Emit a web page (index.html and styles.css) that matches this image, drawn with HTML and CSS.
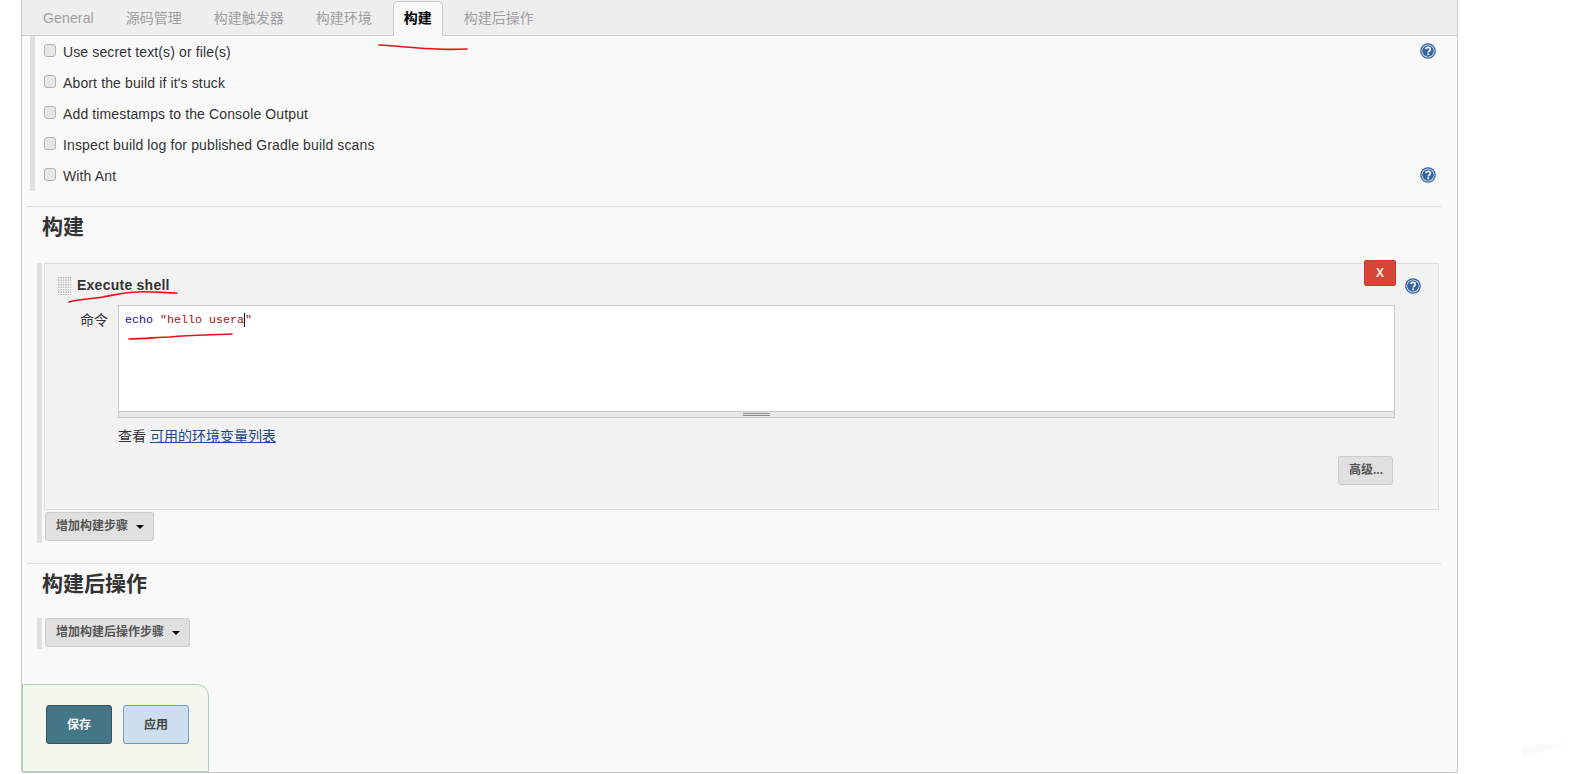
FILE: index.html
```html
<!DOCTYPE html>
<html lang="zh">
<head>
<meta charset="utf-8">
<title>构建</title>
<link rel="stylesheet" href="styles.css">
</head>
<body>
<svg width="0" height="0" class="defs">
  <symbol id="help" viewBox="0 0 16 16">
    <circle cx="8" cy="8" r="7.8" fill="#2f5d9c"/>
    <circle cx="8" cy="8" r="6.6" fill="#dfe8f3"/>
    <circle cx="8" cy="8" r="5.8" fill="#35659f"/>
    <path d="M5.9 6.3C6 5 7 4.4 8.1 4.4c1.3 0 2.2.8 2.2 1.9 0 1.7-2.1 1.7-2.1 3.3" fill="none" stroke="#fff" stroke-width="1.6"/>
    <rect x="7.3" y="10.4" width="1.8" height="1.8" fill="#fff"/>
  </symbol>
</svg>
<main class="panel">
  <nav class="tabs">
    <a class="tab">General</a>
    <a class="tab">源码管理</a>
    <a class="tab">构建触发器</a>
    <a class="tab">构建环境</a>
    <a class="tab active">构建</a>
    <a class="tab">构建后操作</a>
  </nav>

  <section class="options">
    <label class="option"><input type="checkbox"><span>Use secret text(s) or file(s)</span><svg class="help"><use href="#help"/></svg></label>
    <label class="option"><input type="checkbox"><span>Abort the build if it's stuck</span></label>
    <label class="option"><input type="checkbox"><span>Add timestamps to the Console Output</span></label>
    <label class="option"><input type="checkbox"><span>Inspect build log for published Gradle build scans</span></label>
    <label class="option"><input type="checkbox"><span>With Ant</span><svg class="help"><use href="#help"/></svg></label>
  </section>

  <div class="section-head first">
    <h2>构建</h2>
  </div>

  <section class="steps">
    <div class="builder">
      <button class="delete">X</button>
      <div class="builder-head">
        <span class="grip"></span>
        <b class="builder-title">Execute shell</b>
        <svg class="help builder-help"><use href="#help"/></svg>
      </div>
      <div class="field">
        <span class="field-label">命令</span>
        <div class="editor-col">
          <div class="editor">
            <div class="code"><span class="kw">echo</span> <span class="str">"hello usera<i class="caret"></i>"</span></div>
            <div class="grabber"><i></i></div>
          </div>
          <p class="env">查看 <a>可用的环境变量列表</a></p>
        </div>
      </div>
      <div class="adv-row"><button class="btn">高级...</button></div>
    </div>
    <button class="btn add">增加构建步骤<i class="arrow"></i></button>
  </section>

  <div class="section-head second">
    <h2>构建后操作</h2>
  </div>

  <section class="steps post">
    <button class="btn add">增加构建后操作步骤<i class="arrow"></i></button>
  </section>

  <footer class="savebar">
    <button class="save">保存</button>
    <button class="apply">应用</button>
  </footer>
</main>

<svg class="ink" width="1573" height="774" viewBox="0 0 1573 774">
  <path d="M379 45C400 46 420 49 437 49C448 50 458 49 467 49"/>
  <path d="M69 302C80 299 92 299 103 297C115 295 126 292 137 292C150 291 165 293 177 293"/>
  <path d="M129 339C145 339 158 337 170 337C190 335 212 335 232 334"/>
  <polygon class="smudge" points="1522,745 1572,743 1522,758"/>
</svg>
</body>
</html>
```

FILE: styles.css
```css
* { box-sizing: border-box; }
html, body { margin: 0; padding: 0; background: #fff; }
body {
  font-family: "Liberation Sans", "Noto Sans CJK SC", sans-serif;
  font-size: 14px;
  color: #333;
  height: 774px;
  overflow: hidden;
  position: relative;
}
.defs { position: absolute; }

.panel {
  margin-left: 21px;
  width: 1437px;
  height: 773px;
  background: #f9f9f9;
  border: 1px solid #c8c8c8;
  border-top: 0;
  border-radius: 0 0 3px 3px;
  display: flex;
  flex-direction: column;
}

.tabs {
  height: 36px;
  flex: none;
  background: #eee;
  border-bottom: 1px solid #ccc;
  display: flex;
  padding: 1px 0 0 5px;
}
.tab {
  margin: 0 5px;
  padding: 0 10px;
  border: 1px solid transparent;
  color: #a0a0a0;
  line-height: 33px;
  height: 35px;
  white-space: nowrap;
}
.tab:first-child { letter-spacing: 0.15px; }
.tab.active {
  background: #f9f9f9;
  border-color: #ccc;
  border-bottom-color: #f9f9f9;
  border-radius: 5px 5px 0 0;
  color: #000;
  font-weight: bold;
}

.options {
  margin: 0 21px 0 8px;
  border-left: 5px solid #e0e0e0;
  padding-left: 9px;
}
.option {
  height: 31px;
  display: flex;
  align-items: center;
  color: #333;
  letter-spacing: 0.13px;
}
.option input {
  appearance: none;
  width: 12px;
  height: 13px;
  margin: -3px 7px 0 0;
  flex: none;
  background: #e6e6e6;
  border: 1px solid #b4b4b4;
  border-radius: 3px;
}
.help {
  width: 16px;
  height: 16px;
  flex: none;
  margin: -1px 0 0 auto;
}

.section-head {
  margin: 16px 16px 0 5px;
  border-top: 1px solid #ddd;
  padding-left: 15px;
  height: 55px;
}
.section-head h2 {
  margin: 0;
  font-size: 21px;
  line-height: 40px;
  font-weight: bold;
  color: #333;
}
.section-head.first { height: 57px; margin-top: 15px; }
.section-head.second { margin-top: 20px; }

.steps {
  margin: 0 18px 0 15px;
  border-left: 5px solid #e0e0e0;
  padding-left: 2px;
  padding-bottom: 2px;
}
.steps .add { margin-left: 1px; }
.steps.post { margin-top: 0; width: max-content; padding-right: 0; }

.builder {
  position: relative;
  height: 247px;
  background: #f2f2f2;
  border: 1px solid #ddd;
  margin-bottom: 2px;
}
.delete {
  position: absolute;
  top: -4px;
  right: 42px;
  width: 32px;
  height: 26px;
  padding: 0;
  background: #d64537;
  border: 1px solid #c43b2e;
  border-radius: 2px;
  color: #f7efe4;
  font: bold 12px/24px "Liberation Sans", sans-serif;
}
.builder-head {
  height: 41px;
  display: flex;
  align-items: center;
  padding: 1px 17px 0 13px;
}
.grip {
  width: 13px;
  height: 18px;
  flex: none;
  margin-top: 1px;
  background-color: #fff;
  background-image: radial-gradient(circle at 1px 1px, #bbb 1px, transparent 1px);
  background-size: 2.4px 2.4px;
}
.builder-title {
  margin-left: 6px;
  color: #333;
  font-size: 14px;
  letter-spacing: 0.25px;
}
.builder-help { margin-top: 2px; }

.field {
  display: flex;
  padding-right: 43px;
}
.field-label {
  width: 73px;
  flex: none;
  padding: 7px 10px 0 35px;
  line-height: 16px;
  white-space: nowrap;
}
.editor-col { flex: 1; }
.editor {
  height: 113px;
  background: #fff;
  border: 1px solid #c8c8c8;
  display: flex;
  flex-direction: column;
}
.code {
  flex: 1;
  padding: 7px 6px 0;
  font: 11.67px/14px "Liberation Mono", monospace;
  color: #333;
}
.kw { color: #2a00a8; }
.str { color: #a8110f; }
.caret {
  display: inline-block;
  width: 0;
  height: 14px;
  border-left: 1px solid #000;
  vertical-align: top;
}
.grabber {
  height: 6px;
  flex: none;
  background: #e8e8e8;
  border-top: 1px solid #c8c8c8;
  display: flex;
  justify-content: center;
}
.grabber i {
  width: 27px;
  height: 3px;
  margin-top: 1px;
  border-top: 1px solid #888;
  border-bottom: 1px solid #888;
}
.env {
  margin: 9px 0 0;
  line-height: 18px;
  color: #333;
}
.env a {
  color: #204a87;
  text-decoration: underline;
}
.adv-row {
  display: flex;
  justify-content: flex-end;
  padding: 11px 45px 0 0;
}

.btn {
  height: 29px;
  padding: 0 10px;
  background: #e0e0e0;
  border: 1px solid #ccc;
  border-radius: 3px;
  color: #555;
  font: bold 12px/27px "Liberation Sans", "Noto Sans CJK SC", sans-serif;
  white-space: nowrap;
  display: inline-flex;
  align-items: center;
}
.adv-row .btn { padding: 0 9px 0 10px; }
.add { display: flex; padding-right: 9px; }
.arrow {
  width: 0;
  height: 0;
  margin-left: 8px;
  border: 4px solid transparent;
  border-top-color: #000;
  border-bottom: 0;
}

.savebar {
  margin-top: auto;
  width: 187px;
  height: 88px;
  background: #f5f6ee;
  border: 1px solid #a8d0b8;
  border-radius: 0 12px 0 0;
  display: flex;
  gap: 11px;
  padding: 20px 0 0 23px;
  flex: none;
}
.save, .apply {
  width: 66px;
  height: 39px;
  padding: 0 0 2px;
  border-radius: 3px;
  font: bold 12px "Liberation Sans", "Noto Sans CJK SC", sans-serif;
}
.save {
  background: #457688;
  border: 1px solid #2f5563;
  color: #f4f4f4;
}
.apply {
  background: #cddeee;
  border: 1px solid #6b9bcb;
  color: #444;
}

.ink {
  position: absolute;
  left: 0;
  top: 0;
  pointer-events: none;
}
.ink path {
  fill: none;
  stroke: #f00c12;
  stroke-width: 1.6;
  stroke-linecap: round;
}
.ink .smudge { fill: #fbfbfb; }
```
